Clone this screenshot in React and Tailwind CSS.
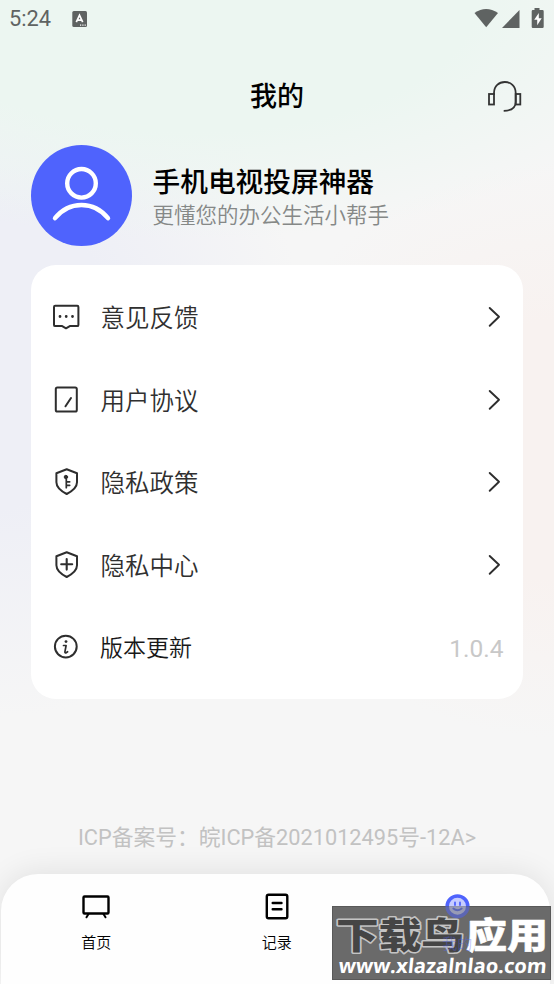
import React from "react";

const stroke = { fill: "none", stroke: "#2e2e2e", strokeWidth: 2, strokeLinecap: "round", strokeLinejoin: "round" };

function FeedbackIcon() {
  return (
    <svg width="28" height="28" viewBox="0 0 28 28" {...stroke}>
      <path d="M3.200 2.700h22q1.200 0 1.200 1.200v18q0 1.200-1.200 1.200h-7.400l-3.800 2.200-3.800-2.200H3.200Q2 23.100 2 21.900V3.900q0-1.200 1.200-1.200z" />
      <path d="M8 13.500h.01M14.200 13.500h.01M20.500 13.500h.01" strokeWidth="2.800" />
    </svg>
  );
}

function AgreementIcon() {
  return (
    <svg width="28" height="28" viewBox="0 0 28 28" {...stroke}>
      <rect x="3.800" y="1.500" width="21" height="24" rx="1.600" />
      <path d="M13.500 20.300l5.500-8.300" />
    </svg>
  );
}

const SHIELD = "M14.700 1.300L25 5.300v9c0 5.500-5 9-10.300 11.700C9.400 23.300 4.400 19.800 4.400 14.300v-9z";

function PolicyIcon() {
  return (
    <svg width="28" height="28" viewBox="0 0 28 28" {...stroke}>
      <path d={SHIELD} />
      <circle cx="13.900" cy="9" r="1.700" fill="#2e2e2e" strokeWidth="1" />
      <path d="M14.300 10v9.700M14.500 13.800h3.200M14.500 17.300h3.200" strokeWidth="1.700" />
    </svg>
  );
}

function PrivacyIcon() {
  return (
    <svg width="28" height="28" viewBox="0 0 28 28" {...stroke}>
      <path d={SHIELD} />
      <path d="M14.700 8v10.600M9.200 13.200h11" strokeWidth="2.100" />
    </svg>
  );
}

function InfoIcon() {
  return (
    <svg width="28" height="28" viewBox="0 0 28 28" {...stroke}>
      <circle cx="13.800" cy="13.600" r="10.900" />
      <circle cx="14" cy="8.600" r="1.400" fill="#2e2e2e" stroke="none" />
      <path d="M11.500 12.500h2.600l-1.200 6.300q-.2 1.400 1.500.8l1.200-.9" strokeWidth="1.700" />
    </svg>
  );
}

function Chevron() {
  return (
    <svg width="14" height="22" viewBox="0 0 14 22" {...stroke}>
      <path d="M1.700 2L11 10.800 1.700 19.800" strokeWidth="1.900" />
    </svg>
  );
}

const ITEMS = [
  { label: "意见反馈", Icon: FeedbackIcon },
  { label: "用户协议", Icon: AgreementIcon },
  { label: "隐私政策", Icon: PolicyIcon },
  { label: "隐私中心", Icon: PrivacyIcon },
];

function StatusBar() {
  return (
    <div className="flex h-[38px] items-center pl-[9px] text-[#5f6362]">
      <span className="w-[43px] text-[21.800px] leading-[38px]">5:24</span>
      <svg className="ml-[20px]" width="16" height="17" viewBox="0 0 16 17">
        <rect x="0.300" y="0" width="14.700" height="16" rx="1.500" fill="#5f6362" />
        <path d="M4.300 11.200L7.500 4.200l3.200 7M5.400 9.200h4.200" fill="none" stroke="#fff" strokeWidth="1.700" />
        <path d="M8 14.200h1.200M10.300 14.200h1.200M12.600 14.200h1.200" stroke="#fff" strokeWidth="1.200" />
      </svg>
      <svg className="ml-auto mr-[8px]" width="72" height="22" viewBox="0 0 72 22" fill="#5f6362">
        <path d="M0.500 5Q12 -3 24 5L12.200 19.200z" />
        <path d="M45.500 2v18H28z" />
        <path d="M60.500 0h5v2h3q1.200 0 1.200 1.200v15.600q0 1.200-1.200 1.200h-9.600q-1.200 0-1.200-1.200V3.200Q57.700 2 58.900 2h1.600z" />
        <path d="M64.800 5l-4.600 6.800h3v5.400l4.500-7h-2.900z" fill="#fff" />
      </svg>
    </div>
  );
}

function Headset() {
  return (
    <svg width="36" height="34" viewBox="0 0 36 34" fill="none" stroke="#333" strokeWidth="1.800">
      <rect x="2" y="14" width="5" height="10.500" />
      <rect x="28.700" y="14" width="4.600" height="10.500" />
      <path d="M7 15v-2C7 6 12 2 17.800 2S28.700 6 28.700 13v9q0 8.500-12 8.900" />
    </svg>
  );
}

function Watermark() {
  return (
    <div className="absolute bottom-[4px] left-[332px] h-[74px] w-[219px] border border-[#595959] bg-[#6a6a6a]">
      <svg width="217" height="72" viewBox="0 0 217 72">
        <g fontFamily="'Noto Sans CJK SC', sans-serif" fontWeight="900" fontSize="36" strokeLinejoin="round" style={{ paintOrder: "stroke" }}>
          <text x="3" y="42" textLength="128" lengthAdjust="spacingAndGlyphs" fill="#454545" stroke="#c4c4c4" strokeWidth="3">下载鸟</text>
          <text x="133" y="42" textLength="82" lengthAdjust="spacingAndGlyphs" fill="#fff" stroke="#fff" strokeWidth="0.500">应用</text>
        </g>
        <text transform="translate(5 66) skewX(-6)" textLength="208" lengthAdjust="spacingAndGlyphs" fontFamily="'Open Sans', sans-serif" fontWeight="700" fontSize="20" fill="#fff">www.xlazalnlao.com</text>
      </svg>
    </div>
  );
}

function Smiley() {
  return (
    <>
      <circle cx="16.500" cy="15.300" r="10.300" fill="#c6ccff" stroke="#4f63fd" strokeWidth="3.600" />
      <path d="M14 11.500v2.500M19 11.500v2.500M12.300 17.500q4 3.500 8.400 0" stroke="#4f63fd" strokeWidth="1.800" />
    </>
  );
}

function NavItem({ label, active, children }) {
  return (
    <div className={active ? "relative z-10 flex w-[180.500px] flex-col items-center pt-[17px]" : "flex w-[180.500px] flex-col items-center pt-[17px]"}>
      <svg width="32" height="32" viewBox="0 0 32 32" fill="none" stroke="#000" strokeWidth="2.400" strokeLinecap="round" strokeLinejoin="round">
        {children}
      </svg>
      <span className={active ? "mt-[10px] text-[15px] leading-[22px] text-[#4f63fd]/35" : "mt-[9px] text-[15px] font-[350] leading-[22px] text-black"}>{label}</span>
    </div>
  );
}

export default function App() {
  return (
    <div className="relative flex h-[984px] w-[554px] flex-col overflow-hidden bg-[#f6f6f6] bg-[radial-gradient(ellipse_520px_240px_at_190px_0px,#ecf6f1_0%,#ecf6f1_55%,#ecf6f100_100%),radial-gradient(ellipse_360px_420px_at_0px_360px,#eeeff6_0%,#eeeff6_35%,#eeeff600_85%),radial-gradient(ellipse_340px_320px_at_554px_450px,#f8f2f0_0%,#f8f2f0_40%,#f8f2f000_90%)] font-[Roboto,'Noto_Sans_CJK_SC',sans-serif]">
      <StatusBar />
      <header className="grid h-[107px] grid-cols-[1fr_auto_1fr] items-start">
        <span />
        <h1 className="mt-[39px] text-[27px] font-medium leading-[40px] text-black">我的</h1>
        <div className="mr-[31px] mt-[42px] justify-self-end"><Headset /></div>
      </header>

      <section className="ml-[31px] flex h-[101px]">
        <svg width="101" height="101" viewBox="0 0 101 101" fill="none" stroke="#fff" strokeWidth="4.400" strokeLinecap="round">
          <circle cx="50.500" cy="50.500" r="50.500" fill="#4f63fd" stroke="none" />
          <circle cx="50.500" cy="38.300" r="14.300" />
          <path d="M24 73.200C38 55.500 63 55.500 77 73.200" />
        </svg>
        <div className="ml-[20.500px] pt-[18px]">
          <h2 className="text-[27.700px] font-medium leading-[40px] text-black">手机电视投屏神器</h2>
          <p className="-mt-[3px] text-[21.500px] font-[350] leading-[32px] text-[#858887]">更懂您的办公生活小帮手</p>
        </div>
      </section>

      <section className="mx-[31px] mt-[19px] flex h-[434px] flex-col rounded-[25px] bg-white py-[10.750px] pl-[21px]">
        {ITEMS.map(({ label, Icon }) => (
          <div key={label} className="flex h-[82.500px] items-center pr-[21.500px]">
            <Icon />
            <span className="ml-[20.500px] flex-1 pt-[4px] text-[24.500px] font-[350] leading-[36px] text-[#303030]">{label}</span>
            <Chevron />
          </div>
        ))}
        <div className="flex h-[82.500px] items-center pr-[19.500px]">
          <InfoIcon />
          <span className="ml-[20px] flex-1 pt-[4px] text-[23px] font-[350] leading-[36px] text-[#181818]">版本更新</span>
          <span className="pt-[3px] text-[24.500px] leading-[36px] text-[#c8c8c8]">1.0.4</span>
        </div>
      </section>

      <p className="mt-[123px] whitespace-nowrap text-center text-[21.750px] leading-[32px] text-[#c2c2c2]">ICP备案号：皖ICP备2021012495号-12A&gt;</p>

      <nav className="mt-auto ml-px mr-[4px] flex h-[110px] rounded-t-[37px] bg-[#fefefe] pl-[5px] shadow-[0_-2px_30px_rgba(0,0,0,0.090)]">
        <NavItem label="首页">
          <path d="M4.500 5.500h23q1 0 1 1v15q0 1-1 1h-23q-1 0-1-1v-15q0-1 1-1z" />
          <path d="M8.500 23l-2 3.300M23.500 23l2 3.300" strokeWidth="2" />
        </NavItem>
        <NavItem label="记录">
          <rect x="5.800" y="3.800" width="20.500" height="23.500" rx="1.800" />
          <path d="M11.700 12h8.800M11.700 18.200h8.800" />
        </NavItem>
        <NavItem label="我的" active>
          <clipPath id="smiley-top"><rect width="32" height="15" /></clipPath>
          <clipPath id="smiley-bottom"><rect y="15" width="32" height="17" /></clipPath>
          <g clipPath="url(#smiley-top)"><Smiley /></g>
          <g clipPath="url(#smiley-bottom)" opacity="0.5"><Smiley /></g>
        </NavItem>
      </nav>
      <Watermark />
    </div>
  );
}
